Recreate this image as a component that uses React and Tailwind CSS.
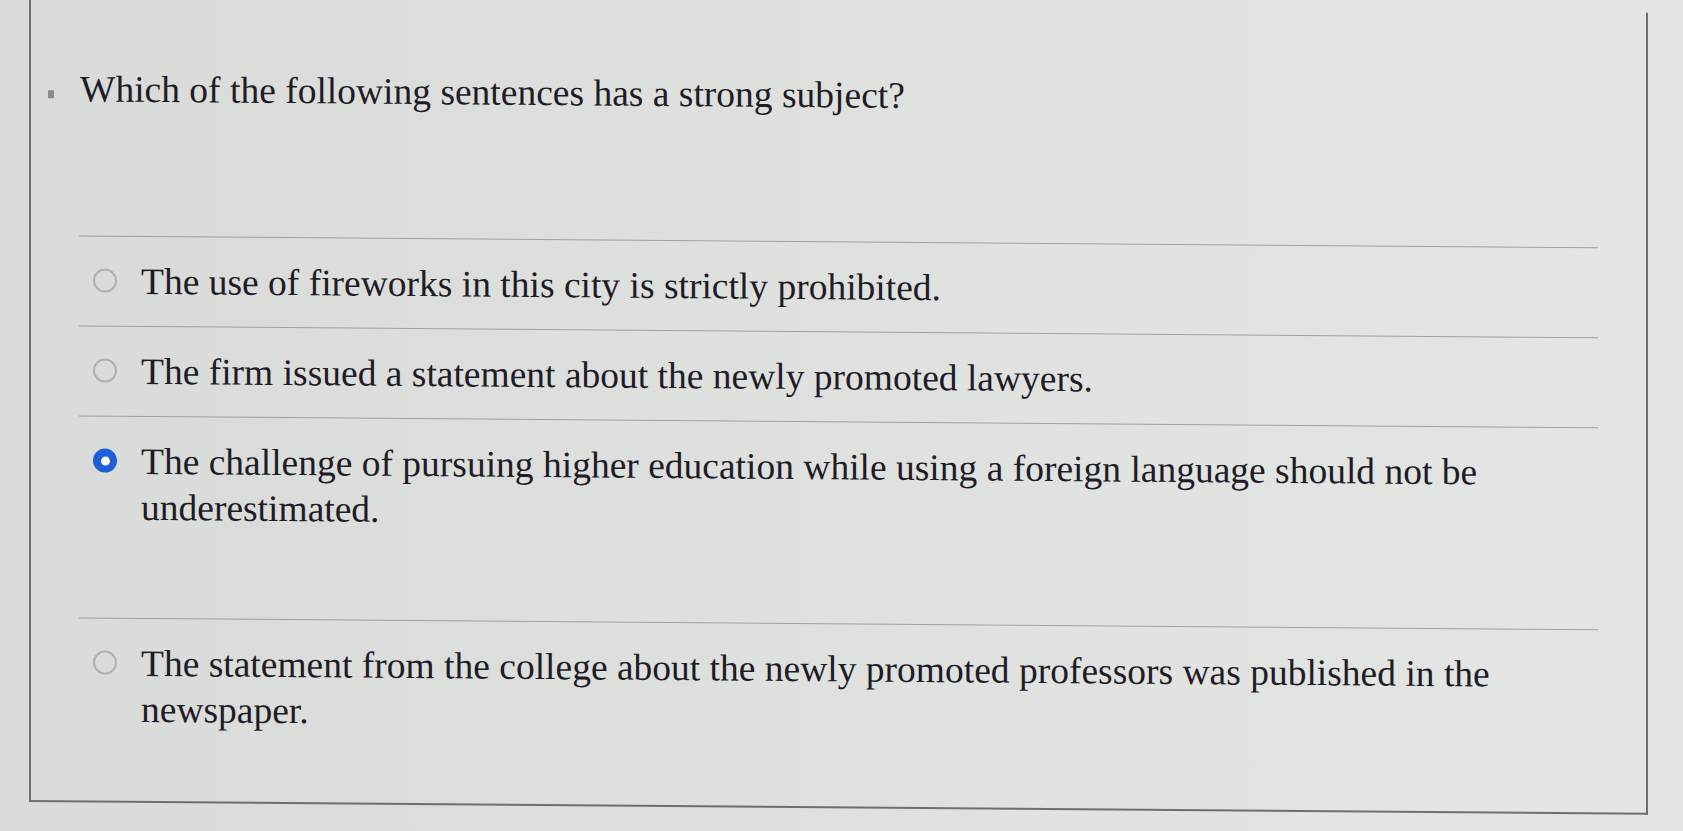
function Words({ text }) {
  const words = text.split(" ");
  return (
    <>
      {words.map((w, k) => (
        <span key={k}>
          {w}
          {k < words.length - 1 ? " " : ""}
        </span>
      ))}
    </>
  );
}

export default function App() {
  const options = [
    { lines: ["The use of fireworks in this city is strictly prohibited."], pb: "pb-[21px]", selected: false },
    { lines: ["The firm issued a statement about the newly promoted lawyers."], pb: "pb-[21px]", selected: false },
    {
      lines: [
        "The challenge of pursuing higher education while using a foreign language should not be",
        "underestimated.",
      ],
      pb: "pb-[87px]",
      selected: true,
    },
    {
      lines: [
        "The statement from the college about the newly promoted professors was published in the",
        "newspaper.",
      ],
      pb: "pb-0",
      selected: false,
    },
  ];

  return (
    <div className="h-[831px] w-full overflow-hidden bg-linear-to-r from-[#d9dbd8] via-[#dfe1de] to-[#e3e6e4] font-['Liberation_Serif',serif] text-[#201b26]">
      <div className="ml-[29px] h-[802px] w-[1619px] origin-top-left skew-y-[0.45deg] border-x-2 border-b-2 border-[#6e6e6e]">
        <div className="flex items-start pt-[66px]">
          <div className="ml-[17px] mt-[24px] h-[8px] w-[6px] shrink-0 rounded-[1px] bg-[#8c8c8c]" />
          <div className="ml-[26px] whitespace-nowrap text-[37.5px] leading-[46px]">
            <Words text="Which of the following sentences has a strong subject?" />
          </div>
        </div>

        <div className="ml-[48px] mt-[123px] w-[1519px]">
          {options.map((o, i) => (
            <div key={i} className={`flex border-t border-[#a0a1a0] pt-[22px] ${o.pb}`}>
              <div className="ml-[14px] mt-[10px] shrink-0">
                {o.selected ? (
                  <div className="flex h-[24px] w-[24px] items-center justify-center rounded-full bg-[#1d5fd8]">
                    <div className="h-[9px] w-[9px] rounded-full bg-white" />
                  </div>
                ) : (
                  <div className="h-[24px] w-[24px] rounded-full border-2 border-[#b0b0b0]" />
                )}
              </div>
              <div className="ml-[24px] text-[37.5px] leading-[46px]">
                {o.lines.map((l, j) => (
                  <div key={j} className="whitespace-nowrap">
                    <Words text={l} />
                  </div>
                ))}
              </div>
            </div>
          ))}
        </div>
      </div>
    </div>
  );
}
